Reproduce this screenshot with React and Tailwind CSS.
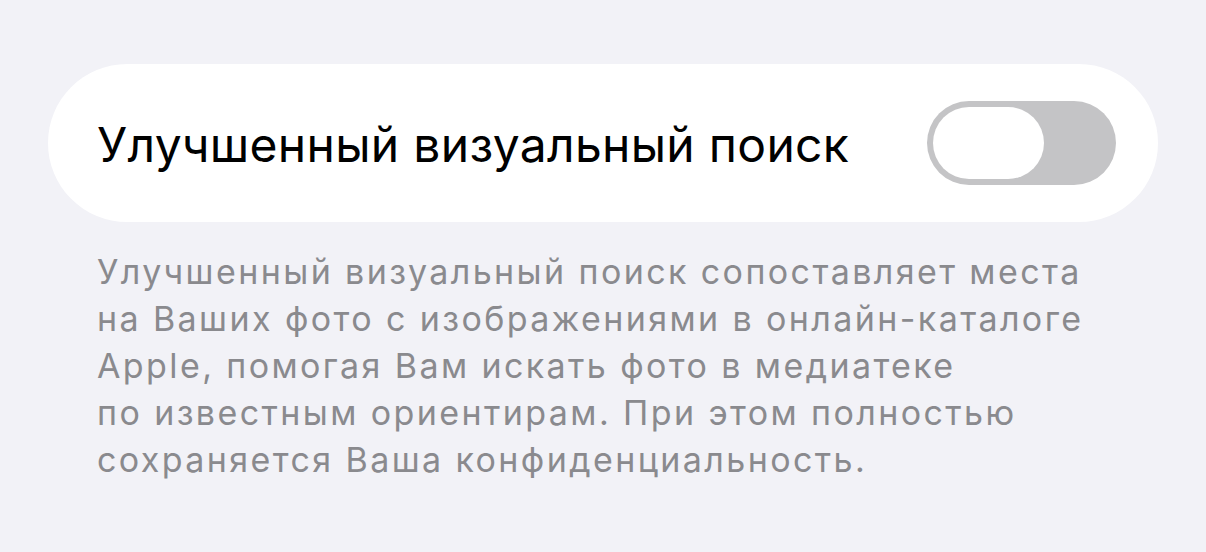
export default function App() {
  return (
    <div
      className="w-[1206px] h-[552px] bg-[#f2f2f7] pt-[64px] px-[48px]"
      style={{ fontFamily: 'Inter, "Noto Sans", sans-serif' }}
    >
      <div className="h-[158px] rounded-full bg-white flex items-center pl-[49px] pr-[42px] justify-between">
        <span className="text-[48px] text-black tracking-[0.3px] pt-[3px]">Улучшенный визуальный поиск</span>
        <div className="w-[189px] h-[84px] rounded-full bg-[#c4c4c6] p-[6px] flex">
          <div className="w-[111px] h-[72px] rounded-full bg-white" />
        </div>
      </div>
      <p className="pl-[49px] pt-[26px] text-[34px] leading-[47px] tracking-[2.4px] text-[#8a8a8e]">
        Улучшенный визуальный поиск сопоставляет места
        <br />
        на Ваших фото с изображениями в онлайн-каталоге
        <br />
        Apple, помогая Вам искать фото в медиатеке
        <br />
        по известным ориентирам. При этом полностью
        <br />
        сохраняется Ваша конфиденциальность.
      </p>
    </div>
  );
}
